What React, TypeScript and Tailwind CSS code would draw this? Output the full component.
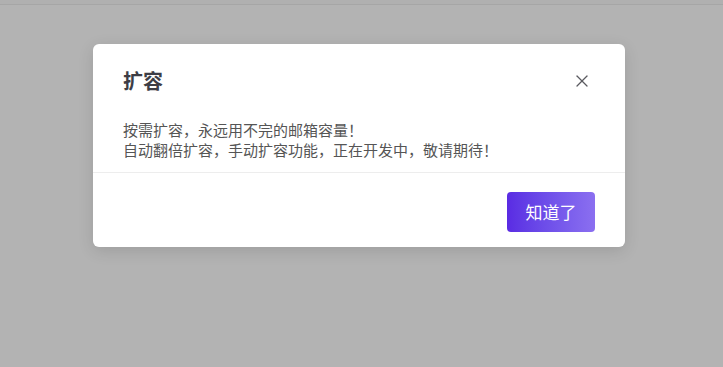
import { X } from "lucide-react";

export default function App() {
  return (
    <div
      className="relative h-[367px] w-[723px] overflow-hidden bg-[#b3b3b3]"
      style={{ fontFamily: '"Noto Sans CJK SC", "Noto Sans", sans-serif' }}
    >
      <div className="h-[4px] bg-[#b0b0b0]" />
      <div className="h-px bg-[#a6a6a6]" />
      <div className="ml-[93px] mt-[39px] w-[532px] rounded-[6px] bg-white shadow-[0_4px_16px_rgba(0,0,0,0.12)]">
        <div className="flex items-center justify-between pl-[30px] pr-[33px] pt-[23px]">
          <h2 className="text-[20px] font-bold leading-[28px] text-[#3d3d45]">扩容</h2>
          <button type="button" className="text-[#5a5a60]">
            <X size={20} strokeWidth={1.5} />
          </button>
        </div>
        <div className="px-[30px] pb-[12px] pt-[25px] text-[15px] leading-[20px] text-[#555]">
          <p>按需扩容，永远用不完的邮箱容量！</p>
          <p>自动翻倍扩容，手动扩容功能，正在开发中，敬请期待！</p>
        </div>
        <div className="h-px bg-[#ededed]" />
        <div className="flex justify-end px-[30px] pb-[15px] pt-[19px]">
          <button
            type="button"
            className="h-[40px] w-[88px] rounded-[4px] bg-gradient-to-r from-[#5a2be3] to-[#8b6ff0] text-[17px] text-white"
          >
            知道了
          </button>
        </div>
      </div>
    </div>
  );
}
